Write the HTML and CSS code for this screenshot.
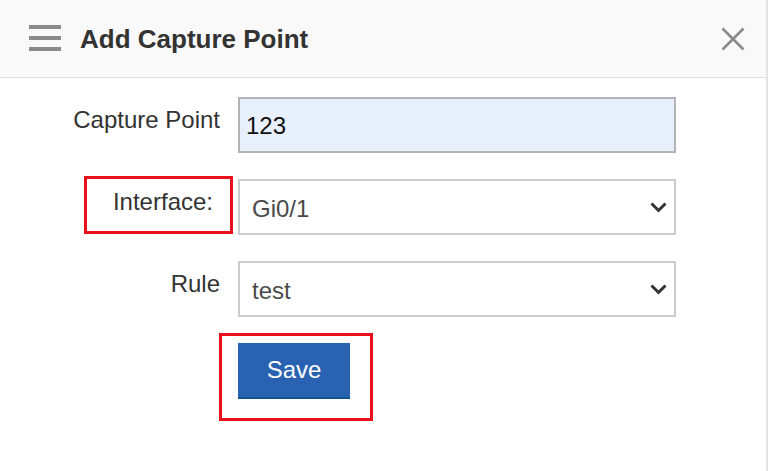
FILE: index.html
```html
<!DOCTYPE html>
<html>
<head>
<meta charset="utf-8">
<link rel="stylesheet" href="styles.css">
</head>
<body>
<div class="dialog">
  <div class="header">
    <svg class="menu-icon" width="32" height="27" viewBox="0 0 32 27">
      <rect x="0" y="0" width="32" height="4" fill="#8a8a8a"/>
      <rect x="0" y="11" width="32" height="4" fill="#8a8a8a"/>
      <rect x="0" y="22" width="32" height="4" fill="#8a8a8a"/>
    </svg>
    <h1 class="title">Add Capture Point</h1>
    <svg class="close-icon" width="24" height="24" viewBox="0 0 24 24">
      <path d="M1.5 1.5 L22.5 22.5 M22.5 1.5 L1.5 22.5" stroke="#8a8a8a" stroke-width="2.6" fill="none"/>
    </svg>
  </div>
  <div class="form">
    <div class="label">Capture Point</div>
    <div class="field"><input class="text-input" type="text" value="123"></div>

    <div class="label mark-wrap">Interface:<span class="mark mark-label"></span></div>
    <div class="field select-wrap">
      <select class="select"><option>Gi0/1</option></select>
      <svg class="chevron" width="17" height="11" viewBox="0 0 17 11"><path d="M1.5 1.5 L8.5 8.5 L15.5 1.5" stroke="#333" stroke-width="3" fill="none"/></svg>
    </div>

    <div class="label">Rule</div>
    <div class="field select-wrap">
      <select class="select"><option>test</option></select>
      <svg class="chevron" width="17" height="11" viewBox="0 0 17 11"><path d="M1.5 1.5 L8.5 8.5 L15.5 1.5" stroke="#333" stroke-width="3" fill="none"/></svg>
    </div>

    <div class="label"></div>
    <div class="field actions">
      <button class="save" type="button">Save</button>
      <span class="mark mark-save"></span>
    </div>
  </div>
</div>
</body>
</html>
```
FILE: styles.css
```css
html, body {
  margin: 0;
  padding: 0;
  background: #ffffff;
  font-family: "Liberation Sans", Arial, sans-serif;
}
.dialog {
  width: 766px;
  height: 471px;
  border-right: 2px solid #e2e2e2;
  box-sizing: content-box;
}
.header {
  height: 77px;
  border-bottom: 1px solid #dedede;
  background: #f9f9f9;
  display: flex;
  align-items: center;
  padding-left: 29px;
  padding-right: 21px;
}
.menu-icon {
  flex: none;
}
.title {
  margin: 0 0 0 19px;
  font-size: 26px;
  line-height: 30px;
  font-weight: bold;
  color: #333333;
  flex: 1;
}
.close-icon {
  flex: none;
}
.form {
  display: grid;
  grid-template-columns: 220px 438px;
  column-gap: 18px;
  row-gap: 26px;
  padding-top: 19px;
}
.label {
  text-align: right;
  font-size: 24px;
  line-height: 28px;
  color: #333333;
  padding-top: 9px;
}
.mark-wrap {
  position: relative;
  padding-right: 7px;
}
.field {
  height: 56px;
}
.text-input {
  box-sizing: border-box;
  width: 100%;
  height: 56px;
  border: 2px solid #b4b4b4;
  background: #e8f0fe;
  font-family: "Liberation Sans", Arial, sans-serif;
  font-size: 24px;
  color: #111111;
  padding: 2px 6px 0;
  margin: 0;
  outline: none;
}
.select-wrap {
  position: relative;
}
.select {
  appearance: none;
  -webkit-appearance: none;
  box-sizing: border-box;
  width: 100%;
  height: 56px;
  border: 2px solid #cccccc;
  background: #ffffff;
  font-family: "Liberation Sans", Arial, sans-serif;
  font-size: 24px;
  color: #4a4a4a;
  padding: 2px 12px 0;
  margin: 0;
  border-radius: 0;
  outline: none;
}
.chevron {
  position: absolute;
  right: 9px;
  top: 23px;
  pointer-events: none;
}
.actions {
  position: relative;
}
.save {
  width: 112px;
  height: 56px;
  background: #2a62b2;
  border: none;
  border-bottom: 2px solid #15548f;
  color: #ffffff;
  font-family: "Liberation Sans", Arial, sans-serif;
  font-size: 24px;
  padding: 0;
  margin: 0;
}
.mark {
  position: absolute;
  border: 3px solid #e8101c;
  box-sizing: border-box;
  pointer-events: none;
}
.mark-label {
  left: 84px;
  top: -3px;
  width: 149px;
  height: 58px;
}
.mark-save {
  left: -19px;
  top: -10px;
  width: 154px;
  height: 88px;
}
```
